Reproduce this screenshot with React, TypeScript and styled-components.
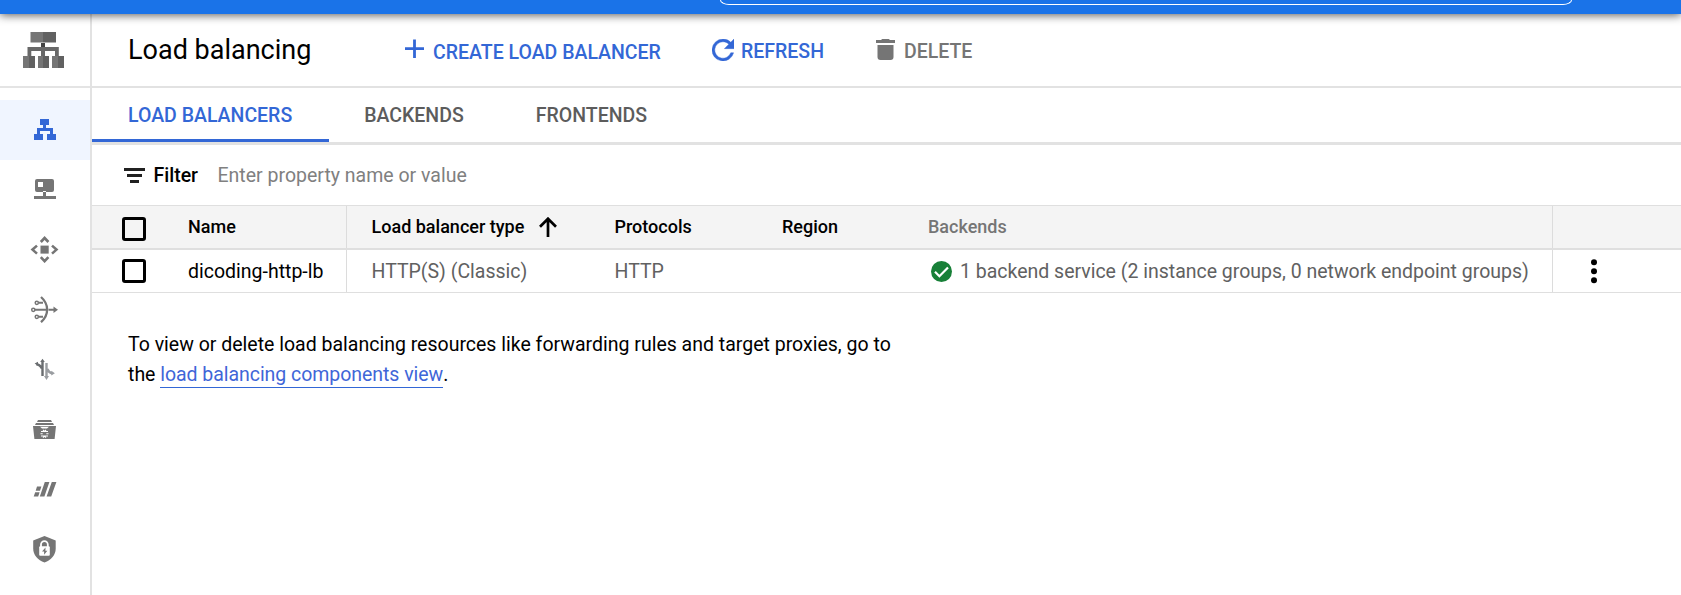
import React from 'react';
import styled, { createGlobalStyle } from 'styled-components';

const GlobalStyle = createGlobalStyle`
  * { box-sizing: border-box; }
  body {
    margin: 0;
    background: #fff;
    color: #000;
    font: 400 19.5px/30px Roboto, "Liberation Sans", sans-serif;
  }
`;

const Page = styled.div`
  display: flex;
  flex-direction: column;
  height: 595px;
  overflow: hidden;
`;

const TopBar = styled.header`
  display: flex;
  flex: none;
  justify-content: flex-end;
  align-items: flex-start;
  height: 14px;
  padding-right: 109px;
  background: #1a73e8;
  box-shadow: 0 1px 10px rgba(0, 0, 0, 0.68);
  z-index: 1;
`;

const SearchBox = styled.div`
  width: 852px;
  height: 5px;
  border: 1px solid #fff;
  border-top: 0;
  border-radius: 0 0 9px 9px / 0 0 5px 5px;
`;

const Body = styled.div`
  display: flex;
  flex: 1;
  min-height: 0;
`;

const Sidebar = styled.nav`
  flex: none;
  width: 92px;
  border-right: 2px solid #e2e2e2;
`;

const Product = styled.div`
  height: 74px;
  padding: 18px 0 0 23px;
  border-bottom: 2px solid #e4e4e4;
  margin-bottom: 12px;
  svg { display: block; }
`;

const NavItem = styled.a<{ $active?: boolean }>`
  display: flex;
  align-items: center;
  height: 60px;
  padding: 0 0 2px 29px;
  color: ${p => (p.$active ? '#3367d6' : '#757575')};
  background: ${p => (p.$active ? '#f0f5ff' : 'transparent')};
`;

const Main = styled.main`
  flex: 1;
  min-width: 0;
`;

const Toolbar = styled.div`
  display: flex;
  height: 74px;
  padding-left: 36px;
  border-bottom: 2px solid #e2e2e2;
`;

const Title = styled.h1`
  width: 277px;
  margin: 0;
  padding-top: 20px;
  font-size: 27px;
  font-weight: 400;
  line-height: 32px;
`;

const Action = styled.button<{ $width: number; $gap: number; $drop?: number; $muted?: boolean }>`
  display: flex;
  align-items: flex-start;
  gap: ${p => p.$gap}px;
  width: ${p => p.$width}px;
  height: 60px;
  padding: 25px 0 0;
  border: 0;
  background: none;
  color: ${p => (p.$muted ? '#757575' : '#3367d6')};
  font: 500 19.5px/24px Roboto, sans-serif;
  white-space: nowrap;
  svg { flex: none; display: block; }
  span { margin-top: ${p => p.$drop ?? 1}px; }
`;

const Tabs = styled.div`
  display: flex;
  height: 57px;
  border-bottom: 3px solid #e2e2e2;
`;

const Tab = styled.a<{ $active?: boolean }>`
  height: 54px;
  padding: 16px 37px 0 36px;
  color: ${p => (p.$active ? '#3367d6' : '#5c5c5c')};
  border-bottom: 3px solid ${p => (p.$active ? '#3367d6' : 'transparent')};
  font-weight: 500;
  line-height: 24px;
  z-index: 1;
  & + & { padding-right: 37px; padding-left: 35px; }
`;

const FilterBar = styled.div`
  display: flex;
  align-items: center;
  height: 60px;
  padding: 1px 0 0 32px;
`;

const FilterLabel = styled.span`
  width: 64px;
  margin-left: 8.5px;
  font-weight: 500;
`;

const Placeholder = styled.span`
  color: #808080;
`;

const Row = styled.div<{ $head?: boolean }>`
  display: grid;
  grid-template-columns: 96px 159px 267.5px 167.5px 146px 625px 1fr;
  height: ${p => (p.$head ? 45 : 43)}px;
  background: ${p => (p.$head ? '#f4f4f4' : '#fff')};
  color: ${p => (p.$head ? '#000' : '#616161')};
  font-size: ${p => (p.$head ? 18 : 19.5)}px;
  font-weight: ${p => (p.$head ? 500 : 400)};
  border-top: ${p => (p.$head ? '1px solid #dfdfdf' : '0')};
  border-bottom: ${p => (p.$head ? '2px solid #dfdfdf' : '1px solid #dfdfdf')};
`;

const Cell = styled.div<{ $divider?: boolean; $indent?: number; $tone?: string; $drop?: boolean }>`
  display: flex;
  align-items: center;
  padding-top: ${p => (p.$drop ? 2 : 0)}px;
  padding-left: ${p => p.$indent ?? 0}px;
  border-right: ${p => (p.$divider ? '1px solid #dcdcdc' : '0')};
  color: ${p => p.$tone ?? 'inherit'};
  white-space: nowrap;
`;

const Checkbox = styled.span<{ $drop?: number }>`
  width: 24px;
  height: 24px;
  margin-top: ${p => p.$drop ?? 0}px;
  border: 3px solid #000;
  border-radius: 3px;
`;

const Note = styled.p`
  width: 790px;
  margin: 37px 0 0 36px;
`;

const Link = styled.a`
  padding-bottom: 1px;
  color: #3f66d8;
  border-bottom: 1px solid #3367d6;
  letter-spacing: -0.05px;
`;

const ProductIcon = () => (
  <svg width="41" height="36" viewBox="0 0 41 36">
    <path fill="#757575" d="M7.5 0H20v10.5H7.5zM0 24h6v12H0zM15 24h5v12h-5zM29 24h6v12h-6z" />
    <path fill="#616161" d="M20 0h13v10.5H20zM6 24h6v12H6zM20 24h6v12h-6zM35 24h6v12h-6z" />
    <path fill="#424242" d="M18 11h4v4h-4z" />
    <path fill="#686868" d="M4.5 15h31.3v9H32v-5H22v5h-4v-5H8.3v5H4.5z" />
  </svg>
);

const BalancerIcon = () => (
  <svg width="31" height="27" viewBox="0 0 31 27" fill="currentColor">
    <path d="M11 3h9v6h-3v3h7v6h3v6h-9v-6h3v-3H11v3h3v6H5v-6h3v-6h6V9h-3z" />
  </svg>
);

const HostIcon = () => (
  <svg width="31" height="27" viewBox="0 0 31 27" fill="currentColor">
    <path fillRule="evenodd" d="M8 3h15q2 0 2 2v9q0 2-2 2H8q-2 0-2-2V5q0-2 2-2zm1 3v5h5V6zM14 15h3v5h10v3H5v-3h9z" />
  </svg>
);

const MoveIcon = () => (
  <svg width="31" height="27" viewBox="0 0 31 27" fill="none" stroke="currentColor" strokeWidth="2.6">
    <rect x="11.5" y="9.6" width="8.2" height="8" fill="currentColor" stroke="none" />
    <path d="m11.8 6 3.8-4 3.8 4M11.8 21.2l3.8 4 3.8-4M8 9.6l-4.5 4 4.5 4M23 9.6l4.5 4-4.5 4" />
  </svg>
);

const NatIcon = () => (
  <svg width="31" height="27" viewBox="0 0 31 27" fill="none" stroke="currentColor" strokeWidth="1.9">
    <path d="M12 1c8.2 7.2 8.2 18 0 25.2" strokeWidth="2.3" />
    <path d="M6 13.8h12M9.5 6.8H14M9.5 20.8H14M19.5 13.8H27" />
    <circle cx="4.3" cy="13.8" r="1.6" fill="#fff" strokeWidth="1.5" />
    <circle cx="7.8" cy="6.8" r="1.6" fill="#fff" strokeWidth="1.5" />
    <circle cx="7.8" cy="20.8" r="1.6" fill="#fff" strokeWidth="1.5" />
    <path d="M24.5 10.5 29 13.8l-4.5 3.3z" fill="currentColor" stroke="none" />
  </svg>
);

const TrafficIcon = () => (
  <svg width="31" height="27" viewBox="0 1 31 27" fill="none" strokeWidth="2.4">
    <g stroke="#6a6d70" fill="#6a6d70">
      <path fill="none" d="M13.5 21V6M12.7 13.4c-.8-2-3.2-4-5.4-4.2" />
      <path stroke="none" d="m11.2 7 2.3-3.2L15.8 7zM9 6.8v4L5.6 8.6z" />
    </g>
    <g stroke="#9a9da1" fill="#9a9da1">
      <path fill="none" d="M17.5 8v13M18.3 14c.8 2 2.5 4 5 4.2" />
      <path stroke="none" d="m15 21 2.5 4 2.5-4zM22.3 15.8v4.6l3.6-2.2z" />
    </g>
  </svg>
);

const CdnIcon = () => (
  <svg width="31" height="27" viewBox="0 0 31 27" fill="currentColor">
    <path d="M9 4h13l1 2H8zM7 7h17l1 2H6zM4 10h23l-1.4 13H5.4z" />
    <path d="M11 10.8h9l-2 1.8h-5z" fill="#fff" />
    <path d="M12 15.5h7M12 20h7M11.5 17.8h2.2M17.3 17.8h2.2M14 14l1.5 1.5L17 14M14 21.7l1.5-1.5 1.5 1.5" fill="none" stroke="#fff" strokeWidth="1.1" />
  </svg>
);

const SlashIcon = () => (
  <svg width="31" height="27" viewBox="0 0 31 27" fill="currentColor">
    <path d="M15.8 6h4.6l-5 14.5h-4.6zM22.8 6h4.6l-5.2 14.5h-4.6zM8 10.5h4.4L11 14.7H6.7zM6.2 16.3h4.4l-1.4 4.2H4.7z" />
  </svg>
);

const ShieldIcon = () => (
  <svg width="31" height="29" viewBox="0 0 31 29" fill="currentColor">
    <path d="m15.5 1 11.2 4.5v8.3c0 6-4.6 11.5-11.2 13.8C8.8 25.3 4.2 19.8 4.2 13.8V5.5z" />
    <path d="M12 12V9.5a3.4 3.4 0 0 1 6.8 0V12" fill="none" stroke="#fff" strokeWidth="1.8" />
    <rect x="10.2" y="11.2" width="10.6" height="9.6" rx="1" fill="#fff" />
    <path d="m16.5 12.5-3.5 4h2.1v3.2l3.3-4h-2z" />
  </svg>
);

const navIcons = [BalancerIcon, HostIcon, MoveIcon, NatIcon, TrafficIcon, CdnIcon, SlashIcon, ShieldIcon];

const PlusIcon = () => (
  <svg width="19" height="20" viewBox="0 0 19 20" fill="none" stroke="currentColor" strokeWidth="2.8">
    <path d="M9.5 .5V19M0 9.7h19" />
  </svg>
);

const RefreshIcon = () => (
  <svg width="22" height="22" viewBox="4 4 16 16" fill="currentColor" stroke="currentColor" strokeWidth=".3">
    <path d="M17.65 6.35A7.96 7.96 0 0 0 12 4a8 8 0 1 0 7.73 10h-2.08A6 6 0 1 1 12 6c1.66 0 3.14.69 4.22 1.78L13 11h7V4z" />
  </svg>
);

const TrashIcon = () => (
  <svg width="19" height="21" viewBox="0 0 19 21" fill="currentColor">
    <path d="M1.5 6h16v12q0 3-3 3h-10q-3 0-3-3zM0 1h5l1.2-1h6.6L14 1h5v3H0z" />
  </svg>
);

const FilterIcon = () => (
  <svg width="21" height="16" viewBox="0 0 21 16" fill="#212121">
    <path d="M0 0h21v3H0zM3 6h15v3H3zM6 12h9v3H6z" />
  </svg>
);

const ArrowIcon = () => (
  <svg width="18" height="20" viewBox="0 0 18 20" fill="none" stroke="#000" strokeWidth="2.7">
    <path d="M9 20V2M1 9.7l8-8 8 8" />
  </svg>
);

const CheckIcon = () => (
  <svg width="21" height="21" viewBox="2 2 20 20">
    <circle cx="12" cy="12" r="10" fill="#188038" />
    <path d="m5.8 12.3 4.2 4.2 8.2-8.3" fill="none" stroke="#fff" strokeWidth="2.1" />
  </svg>
);

const MoreIcon = () => (
  <svg width="6" height="25" viewBox="0 0 6 25">
    <circle cx="3" cy="3.3" r="3" />
    <circle cx="3" cy="12.3" r="3" />
    <circle cx="3" cy="21.3" r="3" />
  </svg>
);

const StatusText = styled.span`
  margin-left: 8px;
  padding-top: 2px;
  letter-spacing: -0.01px;
`;

const SortLabel = styled.span`
  width: 167.5px;
`;

export default function App() {
  return (
    <Page>
      <GlobalStyle />
      <TopBar><SearchBox /></TopBar>
      <Body>
        <Sidebar>
          <Product><ProductIcon /></Product>
          {navIcons.map((Icon, i) => (
            <NavItem key={i} $active={i === 0}><Icon /></NavItem>
          ))}
        </Sidebar>
        <Main>
          <Toolbar>
            <Title>Load balancing</Title>
            <Action $width={307} $gap={9} $drop={2}><PlusIcon /><span>CREATE LOAD BALANCER</span></Action>
            <Action $width={164} $gap={7}><RefreshIcon /><span>REFRESH</span></Action>
            <Action $width={110} $gap={9} $muted><TrashIcon /><span>DELETE</span></Action>
          </Toolbar>
          <Tabs>
            <Tab $active>LOAD BALANCERS</Tab>
            <Tab>BACKENDS</Tab>
            <Tab>FRONTENDS</Tab>
          </Tabs>
          <FilterBar>
            <FilterIcon />
            <FilterLabel>Filter</FilterLabel>
            <Placeholder>Enter property name or value</Placeholder>
          </FilterBar>
          <Row $head>
            <Cell $indent={30}><Checkbox $drop={3} /></Cell>
            <Cell $divider>Name</Cell>
            <Cell $indent={24.5}><SortLabel>Load balancer type</SortLabel><ArrowIcon /></Cell>
            <Cell>Protocols</Cell>
            <Cell>Region</Cell>
            <Cell $divider $tone="#757575">Backends</Cell>
            <Cell />
          </Row>
          <Row>
            <Cell $indent={30}><Checkbox /></Cell>
            <Cell $divider $drop $tone="#000">dicoding-http-lb</Cell>
            <Cell $drop $indent={24.5}>HTTP(S) (Classic)</Cell>
            <Cell $drop>HTTP</Cell>
            <Cell />
            <Cell $divider $indent={3}>
              <CheckIcon />
              <StatusText>1 backend service (2 instance groups, 0 network endpoint groups)</StatusText>
            </Cell>
            <Cell $indent={38}><MoreIcon /></Cell>
          </Row>
          <Note>
            To view or delete load balancing resources like forwarding rules and target proxies, go to
            the <Link>load balancing components view</Link>.
          </Note>
        </Main>
      </Body>
    </Page>
  );
}
